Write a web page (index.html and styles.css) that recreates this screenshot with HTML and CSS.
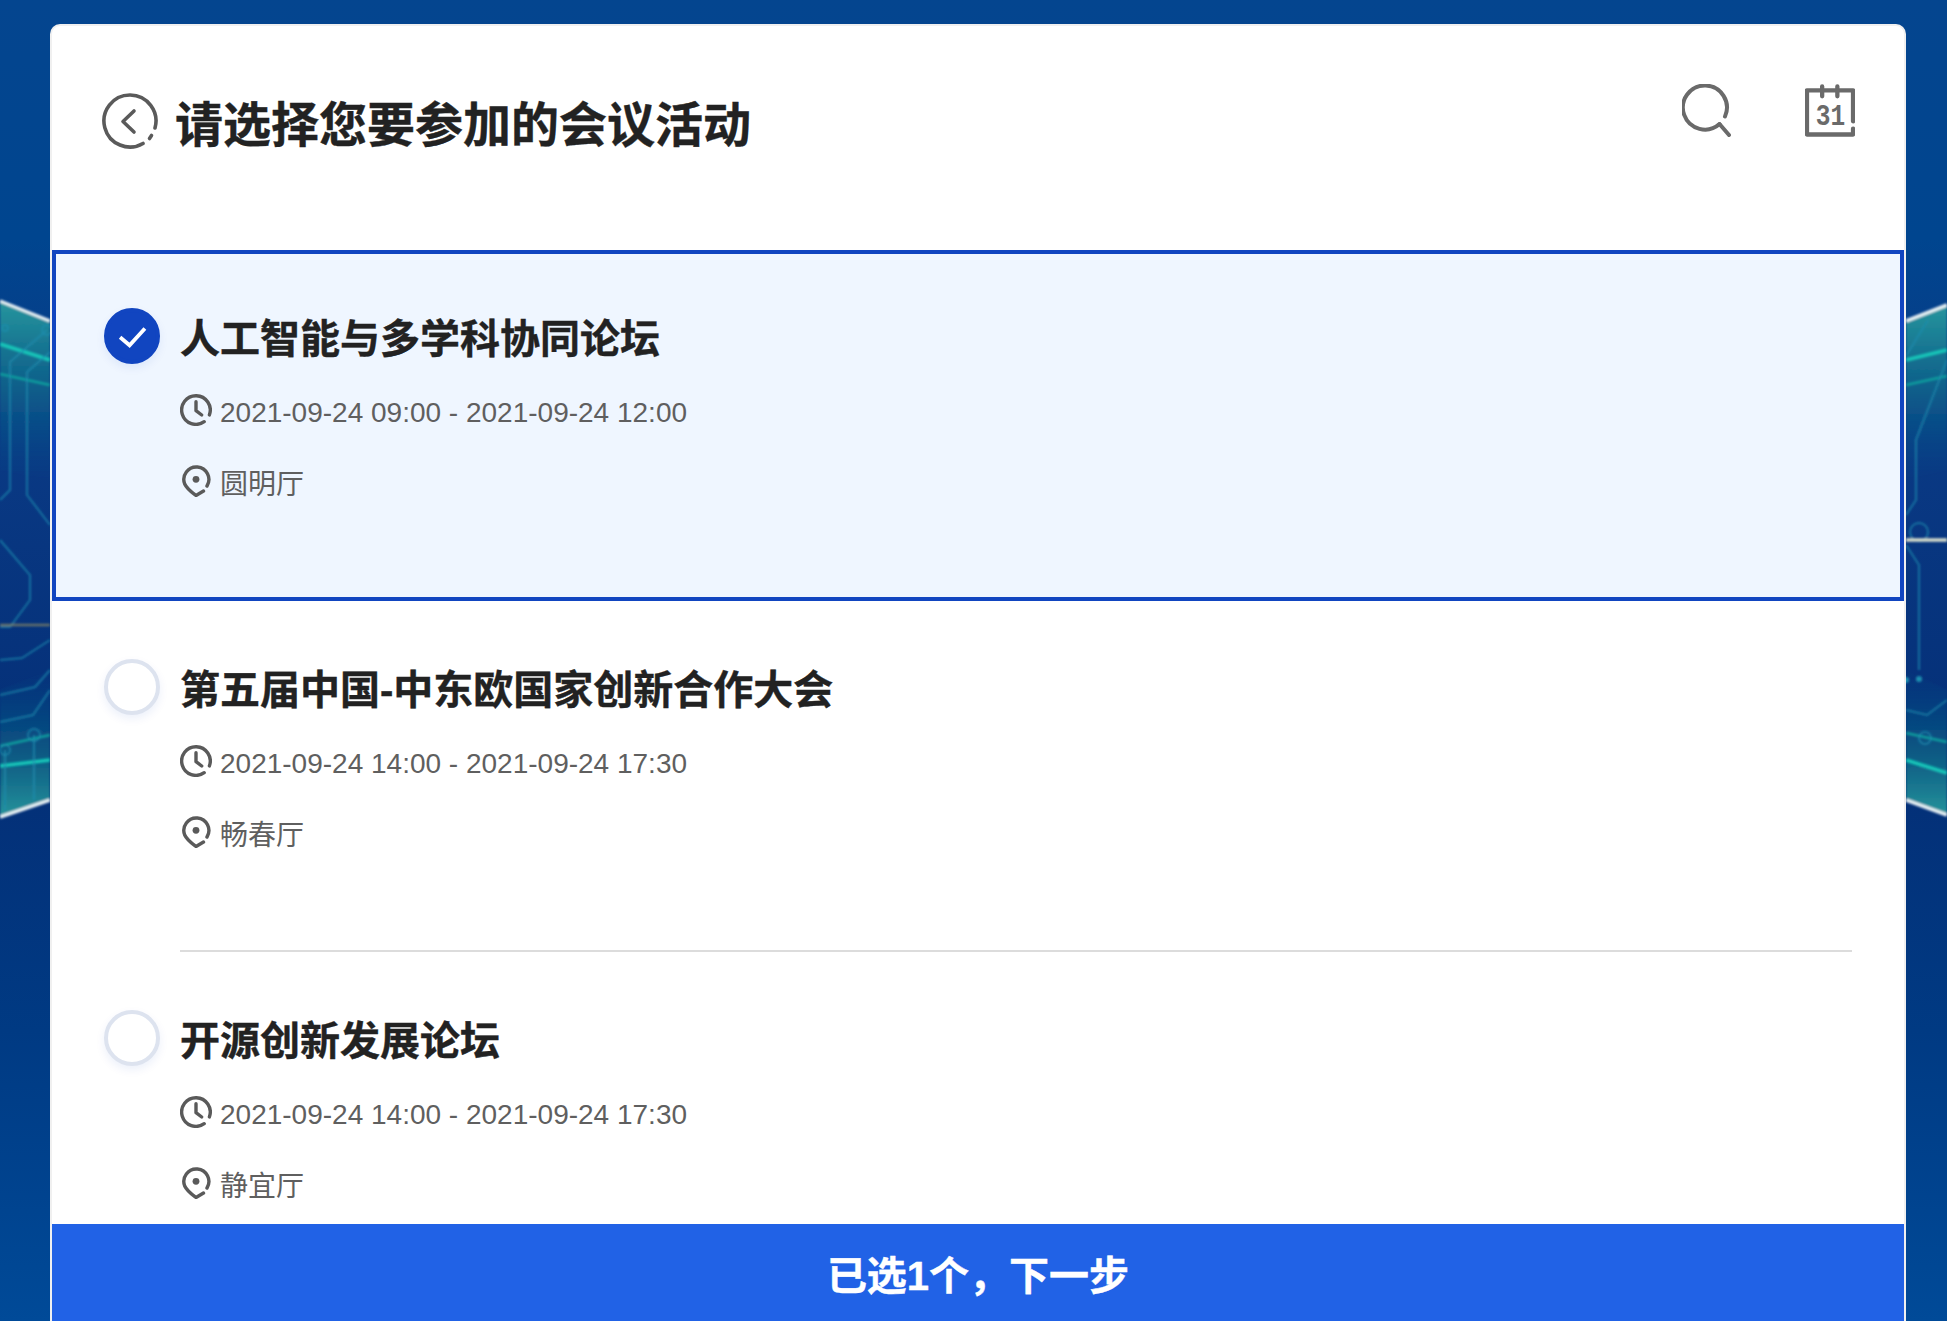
FILE: index.html
```html
<!DOCTYPE html>
<html lang="zh-CN">
<head>
    <meta charset="UTF-8">
    <meta name="viewport" content="width=device-width, initial-scale=1.0">
    <title>请选择您要参加的会议活动</title>
    <link rel="stylesheet" href="styles.css">
</head>
<body>
    <!-- circuit artwork behind the card, only the two side strips show -->
    <svg class="bg-art" viewBox="0 0 1947 1321" aria-hidden="true">
        <defs>
            <linearGradient id="tealTop" x1="0" y1="0" x2="0" y2="1">
                <stop offset="0" stop-color="#2aa0a0" stop-opacity="0.9"/>
                <stop offset="0.5" stop-color="#12788c" stop-opacity="0.55"/>
                <stop offset="1" stop-color="#0a5a90" stop-opacity="0"/>
            </linearGradient>
            <linearGradient id="tealBottom" x1="0" y1="1" x2="0" y2="0">
                <stop offset="0" stop-color="#2aa0a0" stop-opacity="0.9"/>
                <stop offset="0.45" stop-color="#12788c" stop-opacity="0.55"/>
                <stop offset="1" stop-color="#0a5a90" stop-opacity="0"/>
            </linearGradient>
            <filter id="soft"><feGaussianBlur stdDeviation="1.100"/></filter>
        </defs>
        <g filter="url(#soft)">
            <polygon points="0,301 50,321 50,480 0,470" fill="url(#tealTop)"/>
            <polygon points="0,817 50,800 50,670 0,690" fill="url(#tealBottom)"/>
            <polygon points="1906,321 1947,305 1947,470 1906,480" fill="url(#tealTop)"/>
            <polygon points="1906,800 1947,815 1947,690 1906,670" fill="url(#tealBottom)"/>

            <g fill="none" stroke="#e4eef2" stroke-width="3.500">
                <path d="M0 301L50 321"/>
                <path d="M0 817L50 800"/>
                <path d="M1906 321L1947 305"/>
                <path d="M1906 800L1947 815"/>
            </g>
            <g fill="none" stroke="#12c4b8" stroke-width="3.500">
                <path d="M0 344L50 360"/>
                <path d="M0 766L50 760"/>
                <path d="M1906 360L1947 350"/>
                <path d="M1906 760L1947 773"/>
            </g>
            <g fill="none" stroke="#109c9e" stroke-width="2.500">
                <path d="M0 374L50 385"/>
                <path d="M0 746L50 735"/>
                <path d="M1906 385L1947 376"/>
                <path d="M1906 733L1947 742"/>
            </g>
            <g fill="none" stroke="#1f8fb0" stroke-width="2" stroke-opacity="0.65">
                <path d="M47 330L10 362V490L0 500"/>
                <path d="M50 352L27 372V495L50 525"/>
                <path d="M0 540L30 575V600L10 627H0"/>
                <path d="M50 640L22 658L0 660"/>
                <path d="M50 670L35 687L0 695"/>
                <path d="M50 690L33 715L0 722"/>
                <path d="M5 750V810M34 735V800"/>
                <circle cx="5" cy="328" r="3"/>
                <circle cx="47" cy="330" r="5"/>
                <circle cx="5" cy="750" r="5"/>
                <circle cx="34" cy="735" r="6"/>
                <path d="M1906 356L1928 320"/>
                <path d="M1947 360L1916 440V500L1906 515"/>
                <path d="M1906 545L1919 565V670"/>
                <circle cx="1919" cy="532" r="9"/>
                <path d="M1906 710L1927 715L1947 700"/>
                <circle cx="1925" cy="738" r="6"/>
            </g>
            <circle cx="1919" cy="679" r="3" fill="#1f8fb0"/>
            <circle cx="1906" cy="680" r="3" fill="#1f8fb0"/>
            <path d="M0 625H50" stroke="#8d8a62" stroke-width="2.500" stroke-opacity="0.7"/>
            <path d="M1906 540H1947" stroke="#d5dccb" stroke-width="3.500"/>
        </g>
    </svg>

    <div class="card">
        <header class="top-bar">
            <div class="top-left">
                <svg class="icon-back" viewBox="0 0 56 56" fill="none" stroke="#5a5a5a" stroke-width="3.600" stroke-linecap="round" stroke-linejoin="round">
                    <path d="M53 35A26 26 0 1 0 41 50.500"/>
                    <path d="M49.500 42.500L47.500 45.500"/>
                    <path d="M32 18L21 28.500L32 39"/>
                </svg>
                <h1>请选择您要参加的会议活动</h1>
            </div>
            <div class="top-right">
                <svg class="icon-tool" viewBox="0 0 50 53" fill="none" stroke="#6a6a6a" stroke-width="4" stroke-linecap="round" stroke-linejoin="round">
                    <path d="M43 32.500A22 22 0 1 0 37.500 40"/>
                    <path d="M37.500 40L47 51"/>
                </svg>
                <svg class="icon-tool" viewBox="0 0 51 53" fill="none" stroke="#6a6a6a" stroke-width="4.400" stroke-linecap="round" stroke-linejoin="round">
                    <path d="M49 37.500V6H2V51H49V45"/>
                    <path d="M17.500 2V12M33 2V12"/>
                    <text class="cal-num" x="11" y="41" textLength="30" lengthAdjust="spacingAndGlyphs">31</text>
                </svg>
            </div>
        </header>

        <div class="list">
            <div class="item selected">
                <span class="check">
                    <svg viewBox="0 0 24 24" fill="none" stroke="#fff" stroke-width="2.600"><path d="M3.500 12.500L10 18L20.500 6.500"/></svg>
                </span>
                <div class="info">
                    <h2>人工智能与多学科协同论坛</h2>
                    <div class="meta time">
                        <svg class="icon-clock" viewBox="0 0 32 32" fill="none" stroke="#5a5a5a" stroke-width="3.400" stroke-linecap="round" stroke-linejoin="round"><path d="M29.400 20.900A14.300 14.300 0 1 0 24.200 27.700"/><path d="M16 7.700V16.700L21.700 21"/></svg>
                        <span>2021-09-24 09:00 - 2021-09-24 12:00</span>
                    </div>
                    <div class="meta room">
                        <svg class="icon-pin" viewBox="0 0 32 32" fill="none" stroke="#5a5a5a" stroke-width="3.400" stroke-linecap="round" stroke-linejoin="round"><path d="M27 21A12.500 12.500 0 1 0 4.700 19C7 24 12 27.500 16 30.500L23.500 26"/><circle cx="16" cy="14.300" r="3.400" fill="#5a5a5a" stroke="none"/></svg>
                        <span>圆明厅</span>
                    </div>
                </div>
            </div>

            <div class="item">
                <span class="check"></span>
                <div class="info">
                    <h2>第五届中国-中东欧国家创新合作大会</h2>
                    <div class="meta time">
                        <svg class="icon-clock" viewBox="0 0 32 32" fill="none" stroke="#5a5a5a" stroke-width="3.400" stroke-linecap="round" stroke-linejoin="round"><path d="M29.400 20.900A14.300 14.300 0 1 0 24.200 27.700"/><path d="M16 7.700V16.700L21.700 21"/></svg>
                        <span>2021-09-24 14:00 - 2021-09-24 17:30</span>
                    </div>
                    <div class="meta room">
                        <svg class="icon-pin" viewBox="0 0 32 32" fill="none" stroke="#5a5a5a" stroke-width="3.400" stroke-linecap="round" stroke-linejoin="round"><path d="M27 21A12.500 12.500 0 1 0 4.700 19C7 24 12 27.500 16 30.500L23.500 26"/><circle cx="16" cy="14.300" r="3.400" fill="#5a5a5a" stroke="none"/></svg>
                        <span>畅春厅</span>
                    </div>
                </div>
            </div>

            <div class="item">
                <span class="check"></span>
                <div class="info">
                    <h2>开源创新发展论坛</h2>
                    <div class="meta time">
                        <svg class="icon-clock" viewBox="0 0 32 32" fill="none" stroke="#5a5a5a" stroke-width="3.400" stroke-linecap="round" stroke-linejoin="round"><path d="M29.400 20.900A14.300 14.300 0 1 0 24.200 27.700"/><path d="M16 7.700V16.700L21.700 21"/></svg>
                        <span>2021-09-24 14:00 - 2021-09-24 17:30</span>
                    </div>
                    <div class="meta room">
                        <svg class="icon-pin" viewBox="0 0 32 32" fill="none" stroke="#5a5a5a" stroke-width="3.400" stroke-linecap="round" stroke-linejoin="round"><path d="M27 21A12.500 12.500 0 1 0 4.700 19C7 24 12 27.500 16 30.500L23.500 26"/><circle cx="16" cy="14.300" r="3.400" fill="#5a5a5a" stroke="none"/></svg>
                        <span>静宜厅</span>
                    </div>
                </div>
            </div>
        </div>

        <button class="next-btn">已选1个，下一步</button>
    </div>
</body>
</html>
```

FILE: styles.css
```css
* {
    box-sizing: border-box;
}
html, body {
    height: 100%;
}
body {
    margin: 0;
    padding: 24px 41px 0 50px;
    overflow: hidden;
    position: relative;
    font-family: "Liberation Sans", "Noto Sans CJK SC", sans-serif;
    background: linear-gradient(180deg, #04458f 0%, #00458f 18%, #0a3a85 32%, #042f77 58%, #003a83 78%, #004a98 100%);
}
.bg-art {
    position: absolute;
    left: 0;
    top: 0;
    width: 1947px;
    height: 1321px;
}
.card {
    position: relative;
    height: 100%;
    display: flex;
    flex-direction: column;
    overflow: hidden;
    background: #fff;
    border: 2px solid #f0f0f0;
    border-bottom: none;
    border-radius: 10px 10px 0 0;
}
.top-bar {
    height: 224px;
    flex-shrink: 0;
    display: flex;
    justify-content: space-between;
    padding: 58px 49px 0 50px;
}
.top-left {
    display: flex;
    align-items: flex-start;
    gap: 17px;
    padding-top: 9px;
}
.top-left h1 {
    margin: -1px 0 0;
    font-size: 48px;
    line-height: 68px;
    font-weight: 700;
    color: #222;
    -webkit-text-stroke: 0.4px #222;
}
.icon-back {
    width: 56px;
    height: 56px;
    flex-shrink: 0;
}
.top-right {
    display: flex;
    gap: 73px;
}
.icon-tool {
    width: 50px;
    height: 53px;
}
.cal-num {
    font-family: "Liberation Mono", monospace;
    font-size: 31px;
    font-weight: 700;
    fill: #6a6a6a;
    stroke: none;
}
.list {
    flex: 1;
    min-height: 0;
    overflow: hidden;
}
.item {
    display: flex;
    gap: 20px;
    padding: 58px 52px 0 52px;
}
.item.selected {
    background: #eff6ff;
    box-shadow: inset 0 0 0 4px #1145c0;
}
.check {
    width: 56px;
    height: 56px;
    flex-shrink: 0;
    display: flex;
    align-items: center;
    justify-content: center;
    border: 4px solid #dde3ef;
    border-radius: 50%;
    background: #fff;
    box-shadow: 0 4px 10px rgba(17, 69, 192, 0.08);
}
.selected .check {
    background: #1145c0;
    border-color: #1145c0;
}
.check svg {
    width: 35px;
    height: 35px;
    flex-shrink: 0;
}
.info {
    flex: 1;
    min-width: 0;
    padding-bottom: 97px;
    border-bottom: 2px solid #dcdcdc;
}
.selected .info {
    border-bottom-color: transparent;
}
.info h2 {
    margin: 0;
    font-size: 40px;
    line-height: 62px;
    font-weight: 700;
    color: #222;
    -webkit-text-stroke: 0.4px #222;
}
.meta {
    display: flex;
    align-items: center;
    gap: 8px;
    height: 40px;
    font-size: 28px;
    color: #5f5f5f;
}
.time {
    margin-top: 23px;
}
.room {
    margin-top: 29px;
}
.icon-clock, .icon-pin {
    width: 32px;
    height: 32px;
    flex-shrink: 0;
}
.icon-clock {
    margin-bottom: 6px;
}
.icon-pin {
    margin-bottom: 2px;
}
.next-btn {
    flex-shrink: 0;
    height: 97px;
    border: none;
    background: #2162e6;
    color: #fff;
    font-family: inherit;
    font-size: 40px;
    font-weight: 700;
    -webkit-text-stroke: 0.4px #fff;
    cursor: pointer;
}
```
